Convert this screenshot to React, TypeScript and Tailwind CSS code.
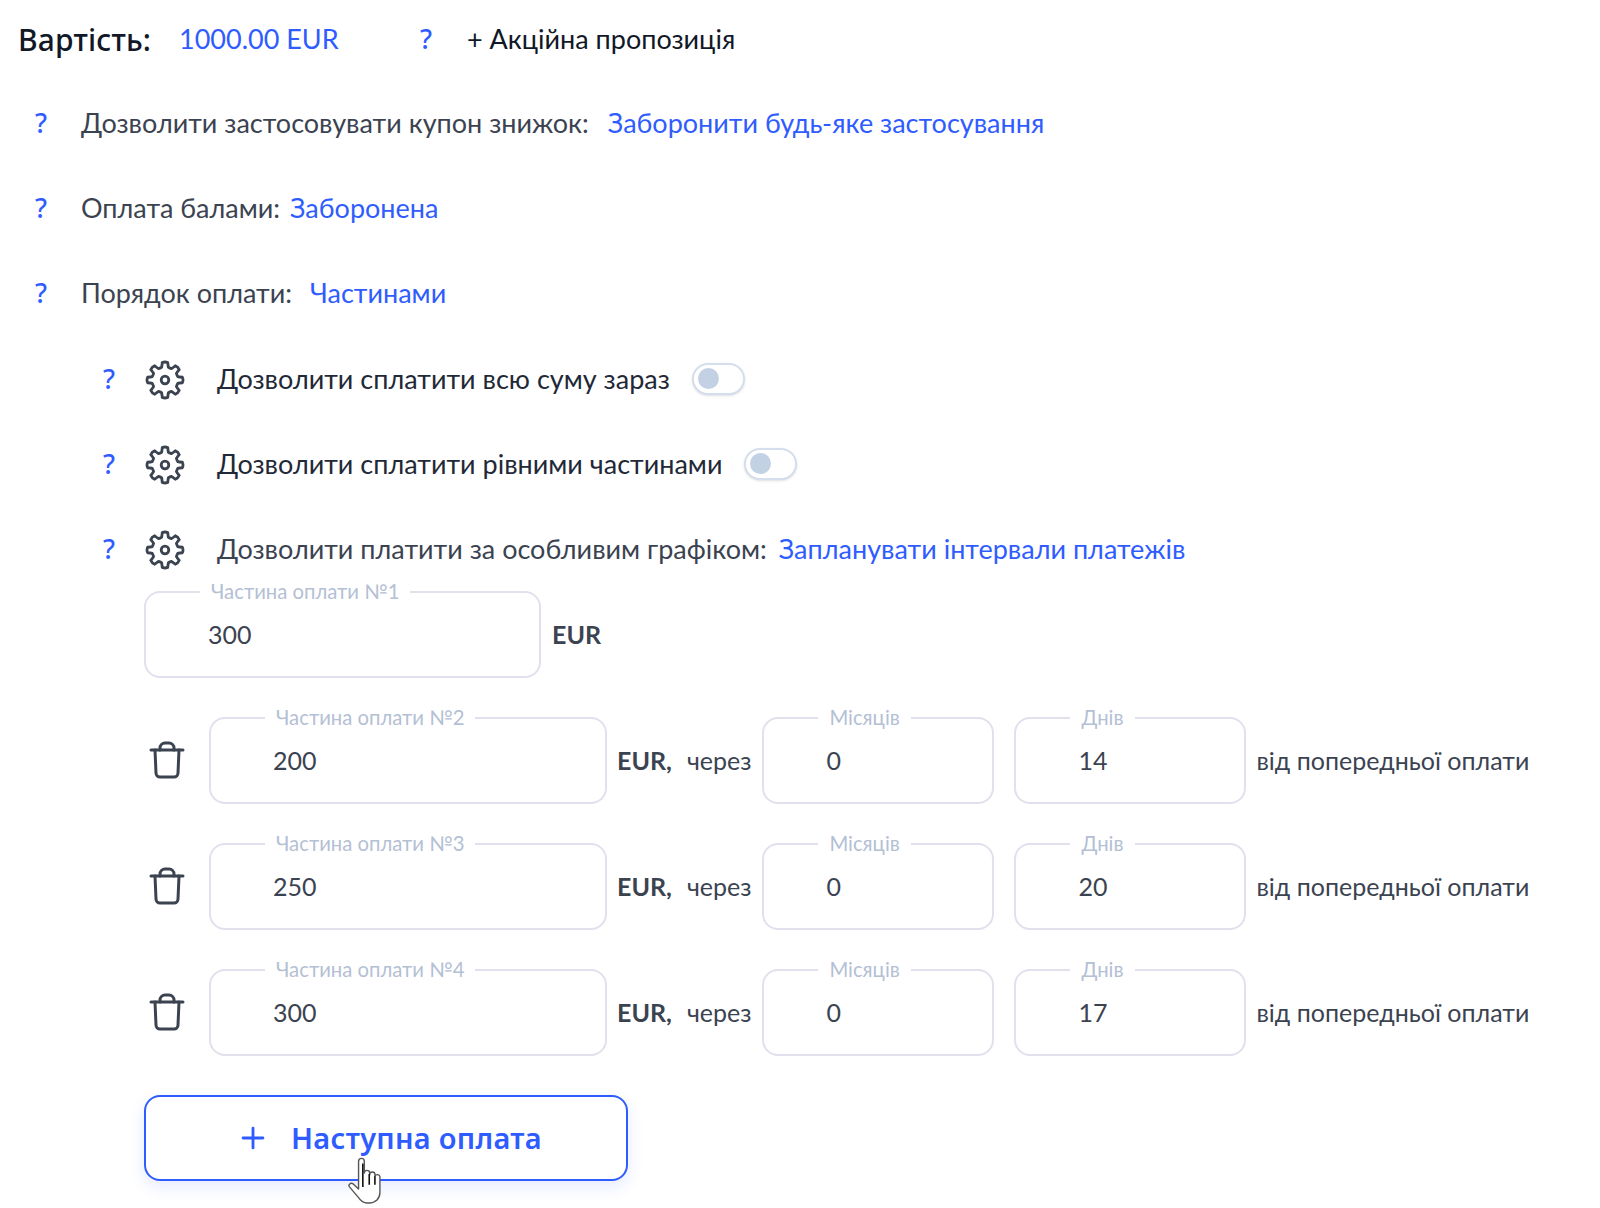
import { Plus } from "lucide-react";

const blue = "text-[#2f5cff]";

// eight rounded teeth around the centre of a 40x40 box
const gearPath = (() => {
  const at = (r: number, deg: number) => {
    const a = ((deg - 90) * Math.PI) / 180;
    return `${(20 + r * Math.cos(a)).toFixed(2)} ${(20 + r * Math.sin(a)).toFixed(2)}`;
  };
  let d = "";
  for (let i = 0; i < 8; i++) {
    const c = i * 45;
    d += `${i === 0 ? "M" : "L"}${at(13.2, c - 15)} `;
    d += `Q${at(14.5, c - 12)} ${at(17.6, c - 9)} `;
    d += `Q${at(18.6, c)} ${at(17.6, c + 9)} `;
    d += `Q${at(14.5, c + 12)} ${at(13.2, c + 15)} `;
    d += `Q${at(12.8, c + 22.5)} ${at(13.2, c + 30)} `;
  }
  return d + "Z";
})();

function GearIcon() {
  return (
    <svg width="40" height="40" viewBox="0 0 40 40" fill="none" stroke="#3b4351" strokeWidth="2.8" strokeLinejoin="round" className="shrink-0">
      <path d={gearPath} />
      <circle cx="20" cy="20" r="3.8" />
    </svg>
  );
}

function Hint({ className = "" }: { className?: string }) {
  return <span className={`font-['Noto_Sans',sans-serif] text-[27px] font-medium ${blue} ${className}`}>?</span>;
}

function Toggle() {
  return (
    <span className="-mt-[2px] ml-[22px] flex h-[32px] w-[53px] items-center rounded-full border-2 border-[#d5deec] bg-white pl-[4px] shadow-sm">
      <span className="h-[21px] w-[21px] rounded-full bg-[#c3d1e5]" />
    </span>
  );
}

function OutlinedField({
  label,
  value,
  width,
}: {
  label: string;
  value: string;
  width: string;
}) {
  return (
    <div className={`relative flex h-[87px] shrink-0 items-center rounded-[16px] border-2 border-[#e1e1ee] bg-white pl-[62px] ${width}`}>
      <span className="absolute left-[54px] top-[-14px] bg-white px-[11px] text-[20.3px] leading-[24px] text-[#b4c0d4]">
        {label}
      </span>
      <span className="text-[25px] text-[#3b4351]">{value}</span>
    </div>
  );
}

function TrashIcon() {
  return (
    <svg width="36" height="38" viewBox="0 0 36 38" fill="none" stroke="#3b4351" strokeWidth="3" strokeLinecap="round" strokeLinejoin="round">
      <path d="M2 9h32" />
      <path d="M11 9V7a5 5 0 0 1 5-5h4a5 5 0 0 1 5 5v2" />
      <path d="M6 9l1 23a4 4 0 0 0 4 4h14a4 4 0 0 0 4-4l1-23" />
    </svg>
  );
}

function HandCursor() {
  return (
    <svg width="37" height="47" viewBox="0 0 34 44" fill="none" className="absolute left-[203px] top-[62px]">
      <path
        d="M10.5 4a2.7 2.7 0 0 1 5.4 0V15a2.5 2.5 0 0 1 5 0v1.5a2.5 2.5 0 0 1 5 0V18a2.4 2.4 0 0 1 4.6.5V33c0 6-4 10-10 10h-2c-4 0-6-2-8-5L2 28c-1.5-2 1-4.500 3.500-2.800L10.500 30Z"
        fill="#ffffff"
        stroke="#555555"
        strokeWidth="1.3"
        strokeLinejoin="round"
      />
      <path d="M14.500 6v22M20.500 16v10M25.800 18v8" stroke="#111111" strokeWidth="1.500" />
    </svg>
  );
}

function PaymentRow({ n, amount, days }: { n: number; amount: string; days: string }) {
  return (
    <div className="mt-[39px] flex items-center">
      <div className="-mt-[2px] flex w-[65px] shrink-0 pl-[5px]">
        <TrashIcon />
      </div>
      <OutlinedField label={`Частина оплати №${n}`} value={amount} width="w-[398px]" />
      <span className="ml-[10px] text-[25px] font-bold text-[#3b4351]">EUR,</span>
      <span className="ml-[15px] text-[25px] text-[#3b4351]">через</span>
      <div className="ml-[11px]">
        <OutlinedField label="Місяців" value="0" width="w-[232px]" />
      </div>
      <div className="ml-[20px]">
        <OutlinedField label="Днів" value={days} width="w-[232px]" />
      </div>
      <span className="ml-[10px] text-[25px] text-[#3b4351]">від попередньої оплати</span>
    </div>
  );
}

function MainRow({ label, value, gap }: { label: string; value: string; gap: string }) {
  return (
    <div className="flex h-[85px] items-center pb-[3px] pl-[35px] text-[27px] text-[#3b4351]">
      <Hint className="w-[46px]" />
      <span>{label}</span>
      <span className={`${gap} ${blue}`}>{value}</span>
    </div>
  );
}

function GearRow({ children }: { children: React.ReactNode }) {
  return (
    <div className="flex h-[85px] items-center pl-[103px] text-[27px]">
      <Hint className="w-[42px]" />
      <GearIcon />
      <div className="ml-[32px] flex items-center">{children}</div>
    </div>
  );
}

export default function App() {
  return (
    <div className="h-[1208px] w-[1600px] overflow-hidden bg-white font-['Lato',sans-serif]">
      <div className="flex h-[78px] items-center pl-[18px] text-[27px]">
        <span className="w-[161px] font-['Noto_Sans',sans-serif] text-[30px] font-medium tracking-[0.2px] text-[#111827]">Вартість:</span>
        <span className={`w-[241px] ${blue}`}>1000.00 EUR</span>
        <Hint className="w-[47px]" />
        <span className="text-[#111827]">+ Акційна пропозиція</span>
      </div>

      <div className="mt-1">
        <MainRow label="Дозволити застосовувати купон знижок:" value="Заборонити будь-яке застосування" gap="ml-[19px]" />
        <MainRow label="Оплата балами:" value="Заборонена" gap="ml-[10px]" />
        <MainRow label="Порядок оплати:" value="Частинами" gap="ml-[18px]" />

        <GearRow>
          <span className="text-[#1f2937]">Дозволити сплатити всю суму зараз</span>
          <Toggle />
        </GearRow>
        <GearRow>
          <span className="text-[#1f2937]">Дозволити сплатити рівними частинами</span>
          <Toggle />
        </GearRow>
        <GearRow>
          <span className="text-[#3b4351]">Дозволити платити за особливим графіком:</span>
          <span className={`ml-[12px] ${blue}`}>Запланувати інтервали платежів</span>
        </GearRow>
      </div>

      <div className="-mt-px pl-[144px]">
        <div className="flex items-center">
          <OutlinedField label="Частина оплати №1" value="300" width="w-[397px]" />
          <span className="ml-[11px] text-[25px] font-bold text-[#3b4351]">EUR</span>
        </div>

        <PaymentRow n={2} amount="200" days="14" />
        <PaymentRow n={3} amount="250" days="20" />
        <PaymentRow n={4} amount="300" days="17" />

        <div className="relative mt-[39px] w-[484px]">
          <button className="flex h-[86px] w-full items-center justify-center gap-[21px] rounded-[16px] border-2 border-[#2f5cff] bg-white pl-[6px] font-['Noto_Sans',sans-serif] text-[29px] font-semibold tracking-[0.3px] text-[#2f5cff] shadow-[0_6px_16px_rgba(47,92,255,0.12)]">
            <Plus size={34} strokeWidth={2} />
            Наступна оплата
          </button>
          <HandCursor />
        </div>
      </div>
    </div>
  );
}
